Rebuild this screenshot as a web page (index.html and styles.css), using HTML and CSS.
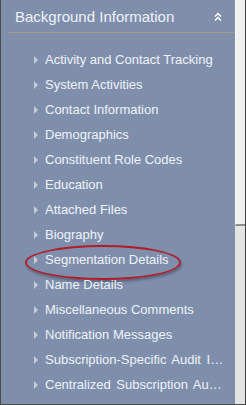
FILE: index.html
```html
<!DOCTYPE html>
<html lang="en">
<head>
  <meta charset="UTF-8" />
  <title>Background Information</title>
  <link rel="stylesheet" href="styles.css">
</head>
<body>

  <div class="frame">
    <div class="panel">
      <div class="panel-header">
        <span>Background Information</span>
        <svg class="collapse" width="8" height="10" viewBox="0 0 8 10">
          <polyline points="1,4.5 4,1.5 7,4.5" />
          <polyline points="1,8.5 4,5.5 7,8.5" />
        </svg>
      </div>

      <ul class="links">
        <li><span class="arrow"></span><span class="label">Activity and Contact Tracking</span></li>
        <li><span class="arrow"></span><span class="label">System Activities</span></li>
        <li><span class="arrow"></span><span class="label">Contact Information</span></li>
        <li><span class="arrow"></span><span class="label">Demographics</span></li>
        <li><span class="arrow"></span><span class="label">Constituent Role Codes</span></li>
        <li><span class="arrow"></span><span class="label">Education</span></li>
        <li><span class="arrow"></span><span class="label">Attached Files</span></li>
        <li><span class="arrow"></span><span class="label">Biography</span></li>
        <li class="marked"><span class="arrow"></span><span class="label">Segmentation Details</span></li>
        <li><span class="arrow"></span><span class="label">Name Details</span></li>
        <li><span class="arrow"></span><span class="label">Miscellaneous Comments</span></li>
        <li><span class="arrow"></span><span class="label">Notification Messages</span></li>
        <li><span class="arrow"></span><span class="label wide">Subscription-Specific Audit Information</span></li>
        <li><span class="arrow"></span><span class="label wide">Centralized Subscription Audit Information</span></li>
      </ul>
    </div>

    <!-- scrollbar -->
    <div class="scrollbar">
      <div class="thumb"></div>
    </div>
  </div>

</body>
</html>
```

FILE: styles.css
```css
* { box-sizing: border-box; margin: 0; padding: 0; }

body {
  background: #ffffff;
  font-family: "Liberation Sans", Arial, sans-serif;
}

.frame {
  width: 246px;
  height: 405px;
  display: flex;
  border-left: 1px solid #4b4b4b;
  border-right: 1px solid #3c3c3c;
  border-bottom: 1px solid #4b4b4b;
  overflow: hidden;
}

.panel {
  width: 234px;
  background: #7f8fab;
  color: #eef2fa;
}

.panel-header {
  height: 33px;
  margin-left: 7px;
  padding-left: 7px;
  padding-right: 13px;
  padding-top: 1px;
  border-bottom: 1px solid #a39b8d;
  display: flex;
  align-items: center;
  justify-content: space-between;
  font-size: 15px;
}

.collapse polyline {
  fill: none;
  stroke: #ffffff;
  stroke-width: 1.5;
}

.links {
  list-style: none;
  margin-top: 14px;
}

.links li {
  height: 25px;
  display: flex;
  align-items: center;
  padding-left: 33px;
  padding-right: 9px;
  font-size: 13px;
  position: relative;
}

.arrow {
  flex: none;
  width: 0;
  height: 0;
  border-left: 4px solid #c6cbd8;
  border-top: 4px solid transparent;
  border-bottom: 4px solid transparent;
  margin-right: 7px;
}

.label {
  white-space: nowrap;
  overflow: hidden;
  text-overflow: ellipsis;
}

.label.wide {
  word-spacing: 2px;
}

/* red callout ring */
.marked::after {
  content: "";
  position: absolute;
  left: 24px;
  top: -2px;
  width: 152px;
  height: 31px;
  border: 2px solid #b01e2c;
  border-radius: 50%;
  box-shadow: 1px 2px 3px rgba(40, 40, 60, 0.45);
}

.scrollbar {
  width: 10px;
  background: #e4e4e4;
}

.thumb {
  height: 226px;
  background: #f0f0f0;
  border-left: 1px solid #fbfbfb;
  border-bottom: 2px solid #8c8c8c;
}
```
